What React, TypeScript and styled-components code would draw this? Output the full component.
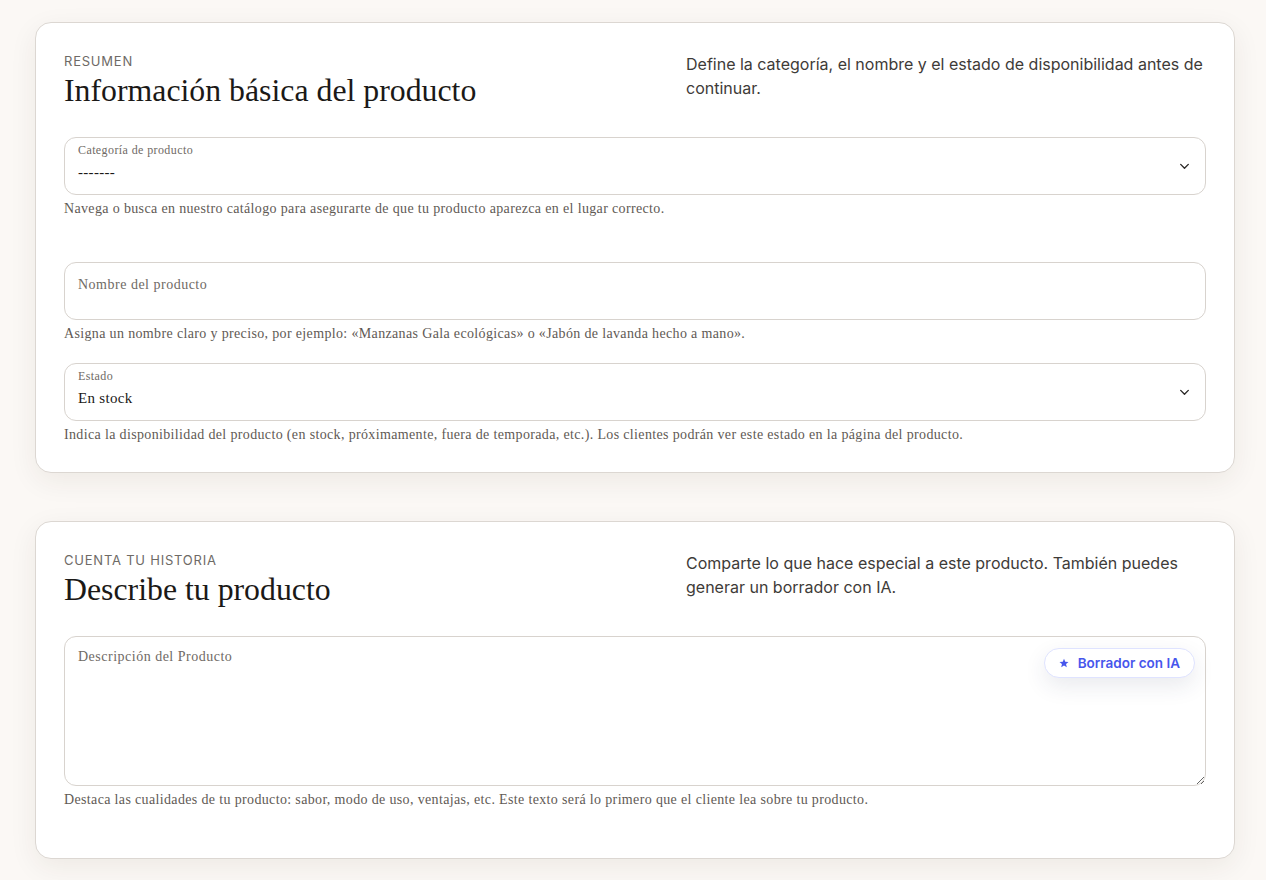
import React from "react";
import styled, { createGlobalStyle } from "styled-components";

const Global = createGlobalStyle`
  * { box-sizing: border-box; }
  html, body { margin: 0; padding: 0; background: #fbf8f5; }
  body { font-family: "Inter", "Liberation Sans", sans-serif; }
`;

const Page = styled.div`
  padding: 22px 31px 22px 35px;
  display: flex;
  flex-direction: column;
  gap: 48px;
`;

const Card = styled.section`
  background: #fff;
  border: 1px solid #dcd7d2;
  border-radius: 16px;
  box-shadow: 0 8px 28px rgba(60, 40, 20, 0.07);
  padding: 29px 28px 29px 28px;
  display: flex;
  flex-direction: column;
`;

const Header = styled.div`
  display: flex;
  justify-content: space-between;
  align-items: flex-start;
  margin-bottom: 27px;
`;

const HeaderLeft = styled.div`
  display: flex;
  flex-direction: column;
`;

const Eyebrow = styled.div`
  font-family: "Inter", sans-serif;
  font-size: 13px;
  letter-spacing: 0.06em;
  text-transform: uppercase;
  color: #6e6a66;
  line-height: 18px;
`;

const Title = styled.h2`
  margin: 2px 0 0;
  font-family: "Liberation Serif", "DejaVu Serif", serif;
  font-weight: 400;
  font-size: 31.8px;
  line-height: 38px;
  color: #1b1917;
`;

const Lede = styled.p`
  margin: 0;
  width: 520px;
  font-family: "Inter", sans-serif;
  font-size: 16px;
  line-height: 24px;
  color: #3e3b38;
`;

const Field = styled.div<{ $spaceAfter?: number }>`
  display: flex;
  flex-direction: column;
  margin-bottom: ${(p) => p.$spaceAfter ?? 0}px;
`;

const Box = styled.div`
  position: relative;
  height: 58px;
  border: 1px solid #d8d3ce;
  border-radius: 12px;
  background: #fff;
  padding: 5px 13px 0;
  display: flex;
  flex-direction: column;
`;

const FloatLabel = styled.div`
  font-family: "Liberation Serif", serif;
  font-size: 12px;
  letter-spacing: 0.4px;
  line-height: 14px;
  color: #6f6a65;
`;

const Value = styled.div`
  font-family: "Liberation Serif", serif;
  font-size: 15px;
  letter-spacing: 0.3px;
  line-height: 20px;
  color: #1b1917;
  margin-top: 5px;
`;

const Placeholder = styled.div`
  font-family: "Liberation Serif", serif;
  font-size: 14px;
  letter-spacing: 0.5px;
  line-height: 18px;
  color: #6f6a65;
  margin-top: 8px;
`;

const Chevron = styled.svg`
  position: absolute;
  right: 14px;
  top: 50%;
  transform: translateY(-50%);
`;

const Help = styled.div`
  margin-top: 6px;
  font-family: "Liberation Serif", serif;
  font-size: 14px;
  letter-spacing: 0.35px;
  line-height: 16px;
  color: #5f5a55;
`;

const AreaWrap = styled.div`
  position: relative;
  display: flex;
`;

const TextArea = styled.textarea`
  width: 100%;
  height: 150px;
  border: 1px solid #d8d3ce;
  border-radius: 12px;
  padding: 12px 13px;
  resize: vertical;
  outline: none;
  font-family: "Liberation Serif", serif;
  font-size: 14px;
  letter-spacing: 0.5px;
  color: #1b1917;
  &::placeholder { color: #6f6a65; }
`;

const AIButton = styled.button`
  position: absolute;
  top: 12px;
  right: 11px;
  height: 30px;
  padding: 0 14px 0 14px;
  border-radius: 999px;
  border: 1px solid #dfe3ff;
  background: #fff;
  box-shadow: 0 8px 22px rgba(40, 50, 90, 0.1);
  display: flex;
  align-items: center;
  gap: 9px;
  font-family: "Inter", sans-serif;
  font-weight: 600;
  font-size: 13.5px;
  color: #4756ec;
  cursor: pointer;
`;

const ChevronIcon = () => (
  <Chevron width="13" height="13" viewBox="0 0 24 24" fill="none" stroke="#2e2c2a" strokeWidth="2.6" strokeLinecap="round" strokeLinejoin="round">
    <path d="M5 9l7 7 7-7" />
  </Chevron>
);

export default function App() {
  return (
    <>
      <Global />
      <Page>
        <Card>
          <Header>
            <HeaderLeft>
              <Eyebrow>Resumen</Eyebrow>
              <Title>Información básica del producto</Title>
            </HeaderLeft>
            <Lede>Define la categoría, el nombre y el estado de disponibilidad antes de continuar.</Lede>
          </Header>
          <Field $spaceAfter={45}>
            <Box>
              <FloatLabel>Categoría de producto</FloatLabel>
              <Value>-------</Value>
              <ChevronIcon />
            </Box>
            <Help>Navega o busca en nuestro catálogo para asegurarte de que tu producto aparezca en el lugar correcto.</Help>
          </Field>
          <Field $spaceAfter={21}>
            <Box>
              <Placeholder>Nombre del producto</Placeholder>
            </Box>
            <Help>Asigna un nombre claro y preciso, por ejemplo: «Manzanas Gala ecológicas» o «Jabón de lavanda hecho a mano».</Help>
          </Field>
          <Field>
            <Box>
              <FloatLabel>Estado</FloatLabel>
              <Value>En stock</Value>
              <ChevronIcon />
            </Box>
            <Help>Indica la disponibilidad del producto (en stock, próximamente, fuera de temporada, etc.). Los clientes podrán ver este estado en la página del producto.</Help>
          </Field>
        </Card>
        <Card>
          <Header>
            <HeaderLeft>
              <Eyebrow>Cuenta tu historia</Eyebrow>
              <Title>Describe tu producto</Title>
            </HeaderLeft>
            <Lede>Comparte lo que hace especial a este producto. También puedes generar un borrador con IA.</Lede>
          </Header>
          <Field $spaceAfter={21}>
            <AreaWrap>
              <TextArea placeholder="Descripción del Producto" />
              <AIButton type="button">
                <svg width="10" height="10" viewBox="0 0 24 24" fill="#4756ec">
                  <path d="M12 1.5l3 7.2 7.8.6-5.9 5.1 1.8 7.6L12 18l-6.7 4 1.8-7.6-5.9-5.1 7.8-.6z" />
                </svg>
                Borrador con IA
              </AIButton>
            </AreaWrap>
            <Help>Destaca las cualidades de tu producto: sabor, modo de uso, ventajas, etc. Este texto será lo primero que el cliente lea sobre tu producto.</Help>
          </Field>
        </Card>
      </Page>
    </>
  );
}
